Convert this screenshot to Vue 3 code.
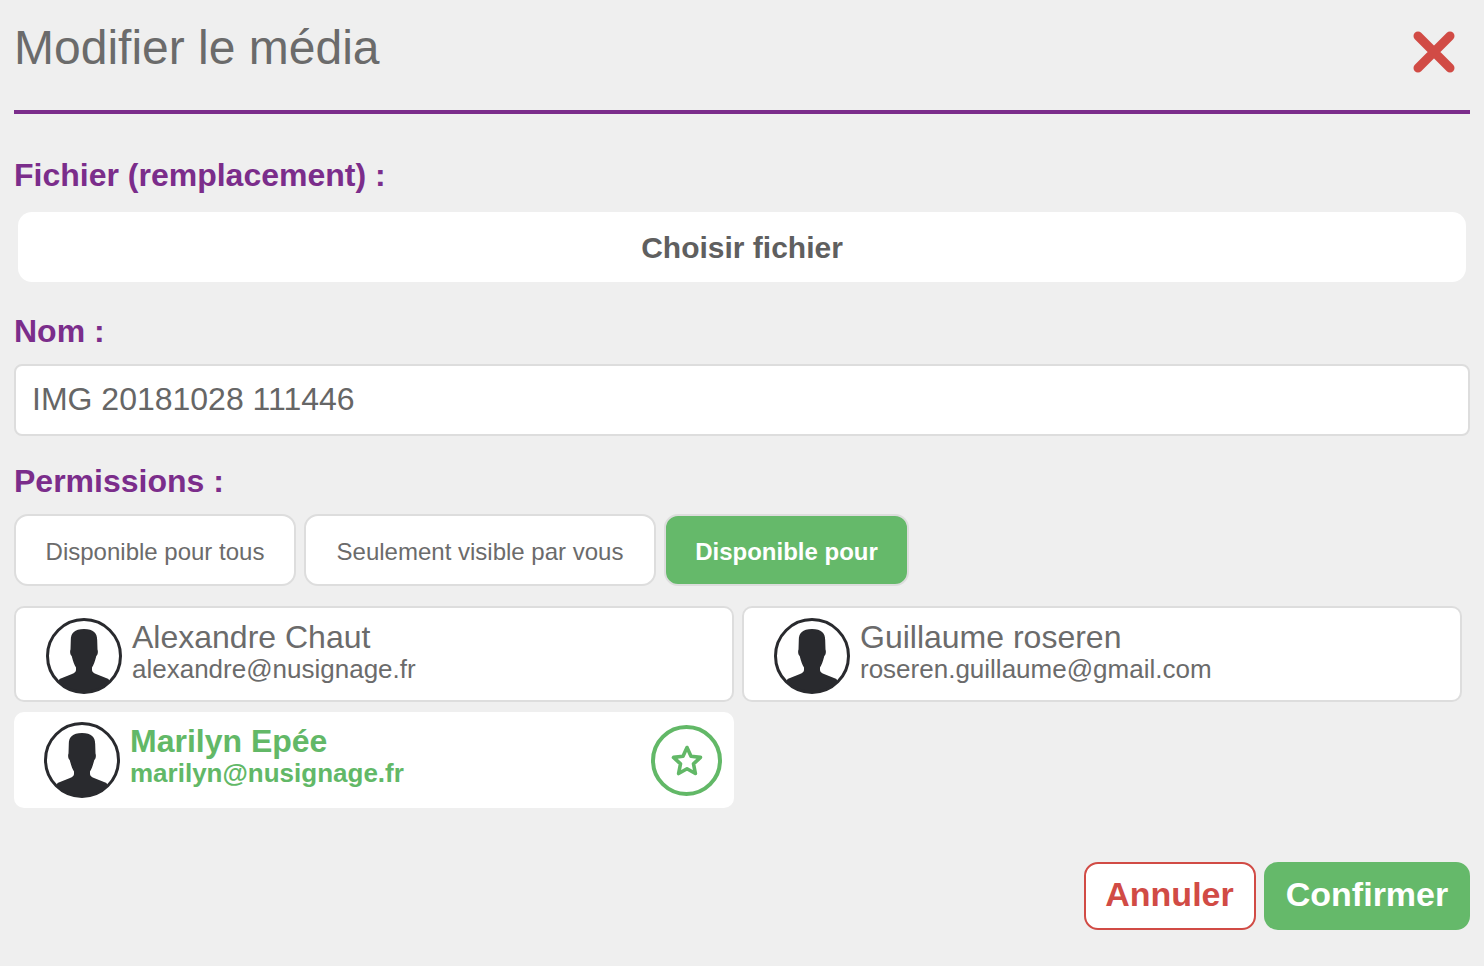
<template>
  <div class="modal">
    <header class="modal-head">
      <h1 class="title">Modifier le média</h1>
      <button type="button" class="close" aria-label="Fermer">
        <svg width="44" height="44" viewBox="0 0 44 44">
          <path d="M6 6 L38 38 M38 6 L6 38" stroke="#d14b45" stroke-width="9" stroke-linecap="round" fill="none" />
        </svg>
      </button>
    </header>

    <label class="label label-file">Fichier (remplacement) :</label>
    <button type="button" class="file-btn">Choisir fichier</button>

    <label class="label label-name">Nom :</label>
    <div class="name-input">IMG 20181028 111446</div>

    <label class="label label-perm">Permissions :</label>
    <div class="perm-row">
      <button
        v-for="p in permissions"
        :key="p.text"
        type="button"
        class="perm-btn"
        :class="{ active: p.active }"
      >{{ p.text }}</button>
    </div>

    <div class="users">
      <div
        v-for="u in users"
        :key="u.email"
        class="user"
        :class="{ selected: u.selected }"
      >
        <svg class="avatar" width="76" height="76" viewBox="0 0 76 76">
          <defs>
            <clipPath :id="'clip-' + u.id"><circle cx="38" cy="38" r="36.5" /></clipPath>
          </defs>
          <circle cx="38" cy="38" r="36.5" fill="#fff" />
          <path
            :clip-path="'url(#clip-' + u.id + ')'"
            fill="#292a2e"
            d="M38 11C28.500 11 24.800 15 24.800 22L24.500 31.500C23.800 33 24 36.500 25.700 38C27 43 28.500 47.500 30 49.500L30 52C30 53.800 28.500 55 26 56L13.500 61L8 76H68L62.500 61L50 56C47.500 55 46 53.800 46 52L46 49.500C47.500 47.500 49 43 50.300 38C52 36.500 52.200 33 51.500 31.500L51.200 22C51.200 15 47.500 11 38 11Z"
          />
          <circle cx="38" cy="38" r="36.500" fill="none" stroke="#292a2e" stroke-width="3" />
        </svg>
        <div class="user-text">
          <div class="user-name">{{ u.name }}</div>
          <div class="user-mail">{{ u.email }}</div>
        </div>
        <span v-if="u.selected" class="star">
          <svg width="34" height="34" viewBox="0 0 34 34">
            <path
              d="M17 3.500 L21 12.300 L30.500 13.400 L23.500 19.900 L25.400 29.500 L17 24.700 L8.600 29.500 L10.500 19.900 L3.500 13.400 L13 12.300 Z"
              fill="none"
              stroke="#62b867"
              stroke-width="3.600"
              stroke-linejoin="round"
            />
          </svg>
        </span>
      </div>
    </div>

    <footer class="actions">
      <button type="button" class="btn cancel">Annuler</button>
      <button type="button" class="btn confirm">Confirmer</button>
    </footer>
  </div>
</template>

<script setup>
const permissions = [
  { text: 'Disponible pour tous' },
  { text: 'Seulement visible par vous' },
  { text: 'Disponible pour', active: true }
]

const users = [
  { id: 'a', name: 'Alexandre Chaut', email: 'alexandre@nusignage.fr' },
  { id: 'g', name: 'Guillaume roseren', email: 'roseren.guillaume@gmail.com' },
  { id: 'm', name: 'Marilyn Epée', email: 'marilyn@nusignage.fr', selected: true }
]
</script>

<style scoped>
.modal {
  box-sizing: border-box;
  height: 966px;
  padding: 0 14px;
  overflow: hidden;
  font-family: "Liberation Sans", Arial, sans-serif;
  color: #666;
}
.modal button {
  font-family: inherit;
  cursor: pointer;
}
.modal-head {
  display: flex;
  justify-content: space-between;
  height: 110px;
  border-bottom: 4px solid #7b2d8b;
}
.title {
  margin: 20px 0 0;
  font-size: 48px;
  line-height: 56px;
  font-weight: 400;
  color: #6b6b6b;
}
.close {
  width: 44px;
  height: 44px;
  margin: 30px 14px 0 0;
  padding: 0;
  border: 0;
  background: none;
}
.close svg {
  display: block;
}
.label {
  display: block;
  font-size: 32px;
  line-height: 38px;
  font-weight: 700;
  color: #7b2d8b;
}
.label-file {
  margin-top: 42px;
}
.label-name {
  margin-top: 30px;
}
.label-perm {
  margin-top: 26px;
}
.file-btn {
  display: block;
  width: 1448px;
  height: 70px;
  margin: 18px 0 0 4px;
  padding: 2px 0 0;
  border: 0;
  border-radius: 14px;
  background: #fff;
  color: #5f5f5f;
  font-size: 30px;
  font-weight: 700;
}
.name-input {
  box-sizing: border-box;
  height: 72px;
  margin-top: 14px;
  padding: 0 16px;
  border: 2px solid #ddd;
  border-radius: 8px;
  background: #fff;
  color: #666;
  font-size: 32px;
  line-height: 66px;
}
.perm-row {
  display: grid;
  grid-template-columns: 282px 352px 245px;
  gap: 8px;
  margin-top: 14px;
}
.perm-btn {
  box-sizing: border-box;
  height: 72px;
  padding: 4px 0 0;
  border: 2px solid #ddd;
  border-radius: 14px;
  background: #fff;
  color: #6b6b6b;
  font-size: 24px;
}
.perm-btn.active {
  background: #65b96a;
  color: #fff;
  font-weight: 700;
}
.users {
  display: grid;
  grid-template-columns: 720px 720px;
  gap: 10px 8px;
  margin-top: 20px;
}
.user {
  position: relative;
  box-sizing: border-box;
  height: 96px;
  display: flex;
  align-items: center;
  padding-left: 30px;
  border: 2px solid #ddd;
  border-radius: 10px;
  background: #fff;
}
.user.selected {
  border: 0;
}
.avatar {
  flex: none;
  margin-top: 4px;
}
.selected .avatar {
  margin-top: 0;
}
.user-text {
  margin: 0 0 4px 10px;
  color: #6b6b6b;
}
.user-name {
  font-size: 32px;
  line-height: 34px;
}
.user-mail {
  font-size: 26px;
  line-height: 30px;
}
.selected .user-text {
  margin-bottom: 8px;
  color: #62b867;
  font-weight: 700;
}
.star {
  position: absolute;
  right: 12px;
  top: 13px;
  box-sizing: border-box;
  width: 71px;
  height: 71px;
  display: flex;
  align-items: center;
  justify-content: center;
  border: 4px solid #62b867;
  border-radius: 50%;
}
.actions {
  display: flex;
  justify-content: flex-end;
  gap: 8px;
  margin-top: 54px;
}
.btn {
  box-sizing: border-box;
  height: 68px;
  padding: 0 0 4px;
  border-radius: 14px;
  font-size: 34px;
  font-weight: 700;
}
.cancel {
  width: 172px;
  padding-right: 1px;
  border: 2px solid #d14b45;
  background: #fff;
  color: #d14b45;
}
.confirm {
  width: 206px;
  border: 0;
  background: #65b96a;
  color: #fff;
}
</style>

<style>
body {
  background: #efefef;
}
</style>
